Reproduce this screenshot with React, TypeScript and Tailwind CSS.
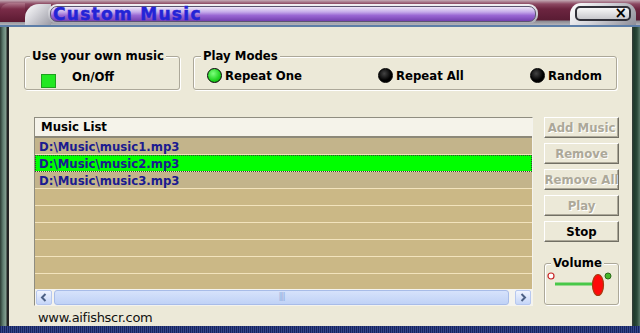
import React from 'react';

const ui = "font-['DejaVu_Sans_Condensed','DejaVu_Sans',sans-serif]";

const files = ['D:\\Music\\music1.mp3', 'D:\\Music\\music2.mp3', 'D:\\Music\\music3.mp3'];

const buttons = [
  { label: 'Add Music', disabled: true },
  { label: 'Remove', disabled: true },
  { label: 'Remove All', disabled: true },
  { label: 'Play', disabled: true },
  { label: 'Stop', disabled: false },
];

const GroupBox: React.FC<{ title: string; left: string; className: string; children?: React.ReactNode }> = ({
  title,
  left,
  className,
  children,
}) => (
  <div
    className={`relative rounded-[3px] border border-[#aca899] shadow-[inset_1px_1px_0_#fff,1px_1px_0_#fff] ${className}`}
  >
    <span
      className={`absolute -top-[8px] ${left} bg-[#ece9d8] px-[2px] text-[13px] leading-[14px] font-bold text-black`}
    >
      {title}
    </span>
    {children}
  </div>
);

const Radio: React.FC<{ on?: boolean; label: string }> = ({ on, label }) => (
  <div className="flex items-center gap-[3px]">
    <span
      className={`h-[15px] w-[15px] rounded-full border border-black ${
        on ? 'bg-[radial-gradient(circle_at_40%_35%,#7dff7d,#1fd31f_60%,#0e8f0e)]' : 'bg-[radial-gradient(circle_at_40%_35%,#444,#000_60%)]'
      }`}
    />
    <span className="text-[13px] font-bold text-black">{label}</span>
  </div>
);

// small scroll arrow button
const Arrow: React.FC<{ dir: 'left' | 'right' }> = ({ dir }) => (
  <div className="flex h-[15px] w-[16px] items-center justify-center rounded-[2px] border border-[#b7c8ef] bg-[linear-gradient(#f0f4fe,#c6d6f8)]">
    <svg width="8" height="9" viewBox="0 0 8 9">
      <polyline
        points={dir === 'left' ? '5.5,1 2,4.5 5.5,8' : '2.5,1 6,4.5 2.5,8'}
        fill="none"
        stroke="#4d6185"
        strokeWidth="2"
      />
    </svg>
  </div>
);

export default function App() {
  return (
    <div className={`flex h-[333px] w-[640px] flex-col overflow-hidden bg-[#ece9d8] ${ui}`}>
      {/* title frame */}
      <div className="flex h-[27px] border-b-2 border-[#5d7ea8] bg-[linear-gradient(#c4acb6_0px,#8c4862_4px,#6c2540_9px,#5a1c34_20px,#8a8890_21px,#b4b4ba_25px)]">
        <div className="mt-[3px] h-[19px] w-[25px] rounded-tl-[9px] bg-[linear-gradient(#b0788c,#7a2c48_6px,#5c1a32)]" />
        <div className="mt-[4px] w-[26px] rounded-tl-[14px] bg-[linear-gradient(135deg,#ffffff,#d9d9de_40%,#9c9ca6)]" />
        <div className="-ml-[3px] mt-[4px] mb-[1px] flex w-[490px] rounded-[9px] bg-[linear-gradient(#f2f2f4,#a4a4ae)] p-[2px]">
          <div className="flex flex-1 items-center rounded-[7px] border border-[#5c5470] bg-[linear-gradient(#eee8f6_0%,#c6acea_35%,#9a68d4_60%,#7440b0_100%)] pl-[2px]">
            <span className="text-[17px] leading-[17px] font-bold tracking-[1.3px] text-[#2424d6] font-['DejaVu_Sans',sans-serif] [-webkit-text-stroke:0.5px_#2424d6]">
              Custom Music
            </span>
          </div>
        </div>
        <div className="w-[32px]" />
        <div className="mt-[3px] flex w-[66px] items-start justify-center rounded-t-[11px] bg-[linear-gradient(135deg,#ffffff,#d4d4da_45%,#8e8e98)] pt-[3px]">
          <div className="relative flex h-[15px] w-[56px] items-center justify-end rounded-[5px] border-2 border-[#303038] bg-[linear-gradient(#f8f8f8,#c8c8cc)] pr-[2px]">
            <span className="text-[15px] leading-[13px] font-bold text-black font-['DejaVu_Sans',sans-serif]">×</span>
          </div>
        </div>
      </div>

      <div className="flex flex-1">
        {/* left frame */}
        <div className="w-[9px] bg-[linear-gradient(90deg,#2b3a33_0px,#5f7d70_3px,#84a092_6px,#222_7px,#222_9px)]" />

        {/* content */}
        <div className="flex flex-1 flex-col">
          <div className="flex gap-[13px] pl-[15px] pt-[29px]">
            <GroupBox title="Use your own music" left="left-[5px]" className="h-[34px] w-[156px]">
              <div className="flex items-start pl-[16px] pt-[17px]">
                <span className="h-[14px] w-[15px] border border-[#1ea01e] bg-[#22e822]" />
                <span className="-mt-[5px] ml-[16px] text-[13px] leading-[16px] font-bold text-black">On/Off</span>
              </div>
            </GroupBox>
            <GroupBox title="Play Modes" left="left-[7px]" className="h-[34px] w-[424px]">
              <div className="grid grid-cols-[171px_152px_auto] pl-[13px] pt-[9px]">
                <Radio on label="Repeat One" />
                <Radio label="Repeat All" />
                <Radio label="Random" />
              </div>
            </GroupBox>
          </div>

          <div className="mt-[27px] flex gap-[11px] pl-[25px]">
            {/* list */}
            <div className="flex h-[189px] w-[499px] flex-col border border-[#8f8d80] border-b-[#f4f3ee] border-r-[#f4f3ee] bg-[#ece9d8]">
              <div className="flex h-[20px] items-center border-b-2 border-[#8c8878] bg-[#f5f3ea] pl-[6px] text-[13px] font-bold text-black">
                Music List
              </div>
              <div className="flex-1 overflow-hidden">
                {Array.from({ length: 9 }).map((_, i) => {
                  const name = files[i];
                  const sel = i === 1;
                  return (
                    <div
                      key={i}
                      className={`flex h-[17px] items-center border-b border-[#f2e3bd] pl-[4px] pt-[1px] text-[13px] font-bold text-[#1b1b90] ${
                        sel
                          ? 'bg-[#00ff00] outline-1 -outline-offset-1 outline-dotted outline-[#3a3a3a]'
                          : name
                            ? 'bg-[#c3b48b]'
                            : 'bg-[#cbb886]'
                      }`}
                    >
                      {name}
                    </div>
                  );
                })}
              </div>
              {/* scrollbar */}
              <div className="flex h-[16px] items-center gap-[2px] bg-[#f4f3ee] px-[1px]">
                <Arrow dir="left" />
                <div className="flex h-[15px] flex-1 items-center justify-center rounded-[3px] border border-[#a8bce8] bg-[linear-gradient(#d6e2fb,#c0d2f6)]">
                  <span className="text-[8px] leading-none tracking-[-1px] text-[#8ea6d8]">||||</span>
                </div>
                <div className="w-[2px]" />
                <Arrow dir="right" />
              </div>
            </div>

            {/* buttons */}
            <div className="flex w-[75px] flex-col">
              <div className="flex flex-col gap-[5px]">
                {buttons.map(b => (
                  <div
                    key={b.label}
                    className={`flex h-[21px] items-center justify-center overflow-hidden whitespace-nowrap border border-t-white border-l-white border-b-[#716f64] border-r-[#716f64] bg-[#ece9d8] text-[13px] font-bold shadow-[inset_-1px_-1px_0_#aca899] ${
                      b.disabled ? 'text-[#aca899] [text-shadow:1px_1px_0_#fff]' : 'text-black'
                    }`}
                  >
                    {b.label}
                  </div>
                ))}
              </div>
              <GroupBox title="Volume" left="left-[6px]" className="mt-[21px] h-[42px] w-[75px]">
                <svg width="73" height="40" viewBox="0 0 73 40" className="block">
                  <circle cx="6" cy="12" r="3" fill="#fff" stroke="#c82828" strokeWidth="1.2" />
                  <line x1="10" y1="20" x2="48" y2="20" stroke="#48c848" strokeWidth="3" />
                  <ellipse cx="53" cy="21" rx="5.5" ry="10.5" fill="#ff0a0a" stroke="#a83a10" strokeWidth="1.2" />
                  <circle cx="63" cy="12" r="3" fill="#46b82a" stroke="#2a6a1a" strokeWidth="1" />
                </svg>
              </GroupBox>
            </div>
          </div>

          <div className="mt-[4px] pl-[29px] text-[13px] leading-[16px] text-[#111] font-['DejaVu_Sans',sans-serif] tracking-[-0.3px]">
            www.aifishscr.com
          </div>
        </div>

        {/* right frame */}
        <div className="w-[8px] bg-[linear-gradient(90deg,#3a3f3a_0px,#1e3a2c_2px,#2c4a3a_5px,#5a7a6a_8px)]" />
      </div>

      {/* bottom frame */}
      <div className="h-[7px] bg-[repeating-linear-gradient(90deg,#18245c_0px,#18245c_1px,#33468c_1px,#33468c_2px)]" />
    </div>
  );
}
